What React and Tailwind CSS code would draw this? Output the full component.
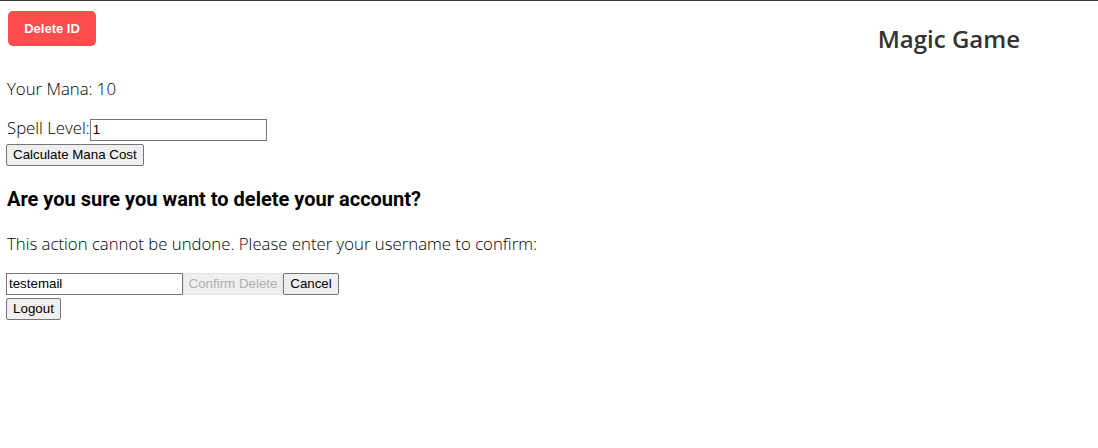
export default function App() {
  return (
    <div className="min-h-[448px] bg-white border-t border-[#3a3a3a] font-['Open_Sans',sans-serif] font-light text-black">
      {/* Top bar */}
      <div className="flex items-start justify-between">
        <button
          type="button"
          className="ml-2 mt-[10px] h-[35px] w-[88px] rounded-[5px] bg-[#ff4d4d] font-['Liberation_Sans',sans-serif] text-[13px] font-bold text-white"
        >
          Delete ID
        </button>
        <h1 className="mr-[78px] mt-[21px] font-['Open_Sans',sans-serif] text-[24px] font-semibold leading-[33px] text-[#333]">
          Magic Game
        </h1>
      </div>

      <div className="px-[7px]">
        <p className="mt-[22px] text-[16.75px] leading-[23px]">Your Mana: 10</p>

        <div className="mt-[16px] flex items-baseline text-[16.75px] leading-[23px]">
          <label>Spell Level:</label>
          <input
            defaultValue="1"
            className="h-[22px] w-[177px] border border-[#767676] px-[2px] font-['Liberation_Sans',sans-serif] text-[13.333px] font-normal"
          />
        </div>
        <button
          type="button"
          className="-ml-px mt-[3px] block h-[22px] rounded-[2px] border border-[#767676] bg-[#efefef] px-[6px] font-['Liberation_Sans',sans-serif] text-[13.333px] font-normal"
        >
          Calculate Mana Cost
        </button>

        <h2 className="mt-[20px] font-['Roboto',sans-serif] text-[20px] font-bold leading-[26px]">
          Are you sure you want to delete your account?
        </h2>
        <p className="mt-[20px] text-[16.75px] leading-[23px]">
          This action cannot be undone. Please enter your username to confirm:
        </p>

        <div className="-ml-px mt-[18px] flex font-['Liberation_Sans',sans-serif] text-[13.333px] font-normal">
          <input
            defaultValue="testemail"
            className="h-[22px] w-[177px] border border-[#767676] px-[2px]"
          />
          <button
            type="button"
            disabled
            className="h-[22px] w-[100px] whitespace-nowrap rounded-[2px] border border-[#e3e3e3] bg-[#efefef] px-0 text-[#b0b0b0]"
          >
            Confirm Delete
          </button>
          <button
            type="button"
            className="h-[22px] w-[56px] whitespace-nowrap rounded-[2px] border border-[#767676] bg-[#efefef] px-0"
          >
            Cancel
          </button>
        </div>
        <button
          type="button"
          className="-ml-px mt-[3px] block h-[22px] w-[55px] whitespace-nowrap rounded-[2px] border border-[#767676] bg-[#efefef] px-0 font-['Liberation_Sans',sans-serif] text-[13.333px] font-normal"
        >
          Logout
        </button>
      </div>
    </div>
  );
}
